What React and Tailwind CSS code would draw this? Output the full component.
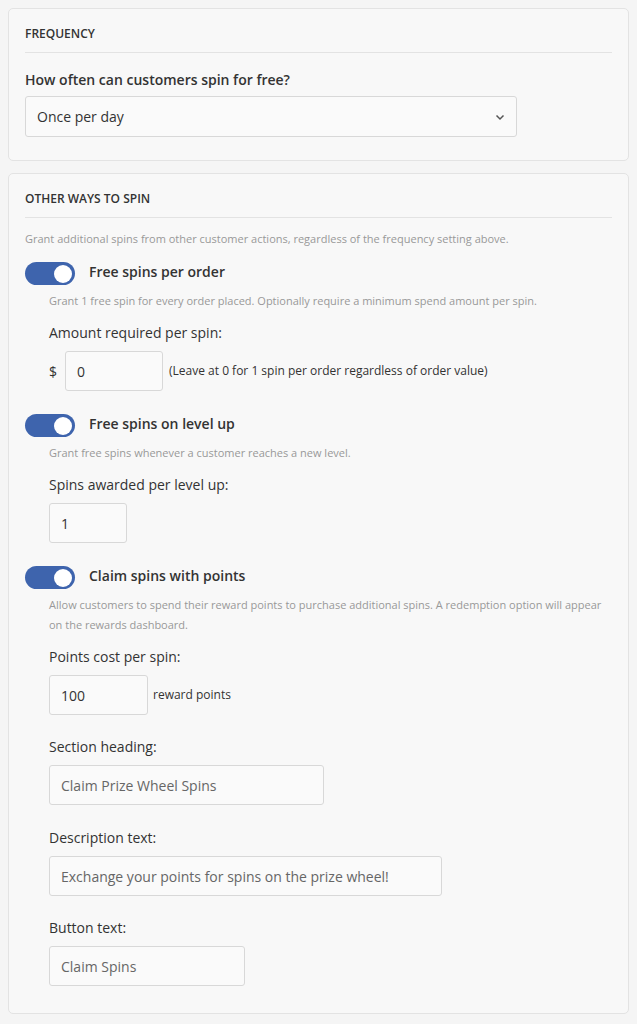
function Toggle() {
  return (
    <span className="relative inline-flex h-[23px] w-[50px] shrink-0 items-center rounded-full bg-[#3e64ad]">
      <span className="absolute right-[3px] h-[18px] w-[18px] rounded-full bg-white" />
    </span>
  );
}

function Field({ label, children, className = "" }) {
  return (
    <div className={className}>
      <p className="text-[14px] leading-[20px] text-[#333]">{label}</p>
      <div className="mt-[8px] flex items-center">{children}</div>
    </div>
  );
}

function TextBox({ value, width, muted }) {
  return (
    <div
      className={`flex h-[40px] items-center rounded-[3px] border border-[#d8d8d8] bg-[#fafafa] px-[11px] text-[14px] ${
        muted ? "text-[#666]" : "text-[#333]"
      }`}
      style={{ width }}
    >
      {value}
    </div>
  );
}

function Option({ title, desc, children }) {
  return (
    <div>
      <div className="flex items-start gap-[14px]">
        <Toggle />
        <span className="text-[14px] font-semibold leading-[20px] text-[#333]">{title}</span>
      </div>
      <div className="pl-[24px]">
        <p className="mt-[6px] text-[11px] leading-[20px] text-[#999]">{desc}</p>
        {children}
      </div>
    </div>
  );
}

export default function App() {
  return (
    <div className="min-h-screen bg-[#f5f5f5] p-[8px] font-['Open_Sans',sans-serif]">
      <section className="rounded-[5px] border border-[#e3e3e3] bg-[#f8f8f8] px-[16px] pb-[23px] pt-[16px]">
        <h2 className="text-[12px] font-semibold uppercase leading-[18px] text-[#333]">Frequency</h2>
        <div className="mt-[9px] border-t border-[#e3e3e3]" />
        <p className="mt-[17px] text-[14px] font-semibold leading-[20px] text-[#333]">How often can customers spin for free?</p>
        <div className="mt-[6px] flex h-[41px] w-[492px] items-center justify-between rounded-[3px] border border-[#d8d8d8] bg-[#fafafa] pl-[11px] pr-[10px] text-[14px] text-[#333]">
          <span>Once per day</span>
          <svg width="12" height="12" viewBox="0 0 12 12" fill="none" stroke="#555" strokeWidth="1.5">
            <path d="M2.5 4.5 6 8l3.5-3.5" />
          </svg>
        </div>
      </section>

      <section className="mt-[12px] rounded-[5px] border border-[#e3e3e3] bg-[#f8f8f8] px-[16px] pb-[27px] pt-[16px]">
        <h2 className="text-[12px] font-semibold uppercase leading-[18px] text-[#333]">Other ways to spin</h2>
        <div className="mt-[9px] border-t border-[#e3e3e3]" />
        <p className="mt-[13px] text-[11px] leading-[16px] text-[#999]">
          Grant additional spins from other customer actions, regardless of the frequency setting above.
        </p>

        <div className="mt-[15px] flex flex-col gap-[23px]">
          <Option
            title="Free spins per order"
            desc="Grant 1 free spin for every order placed. Optionally require a minimum spend amount per spin."
          >
            <Field label="Amount required per spin:" className="mt-[12px]">
              <span className="mr-[8px] text-[14px] text-[#333]">$</span>
              <TextBox value="0" width={98} />
              <span className="ml-[6px] text-[12px] text-[#333]">(Leave at 0 for 1 spin per order regardless of order value)</span>
            </Field>
          </Option>

          <Option title="Free spins on level up" desc="Grant free spins whenever a customer reaches a new level.">
            <Field label="Spins awarded per level up:" className="mt-[12px]">
              <TextBox value="1" width={78} />
            </Field>
          </Option>

          <Option
            title="Claim spins with points"
            desc="Allow customers to spend their reward points to purchase additional spins. A redemption option will appear on the rewards dashboard."
          >
            <Field label="Points cost per spin:" className="mt-[12px]">
              <TextBox value="100" width={99} />
              <span className="ml-[5px] text-[12px] text-[#333]">reward points</span>
            </Field>
            <Field label="Section heading:" className="mt-[22px]">
              <TextBox value="Claim Prize Wheel Spins" width={275} muted />
            </Field>
            <Field label="Description text:" className="mt-[23px]">
              <TextBox value="Exchange your points for spins on the prize wheel!" width={393} muted />
            </Field>
            <Field label="Button text:" className="mt-[22px]">
              <TextBox value="Claim Spins" width={196} muted />
            </Field>
          </Option>
        </div>
      </section>
    </div>
  );
}
